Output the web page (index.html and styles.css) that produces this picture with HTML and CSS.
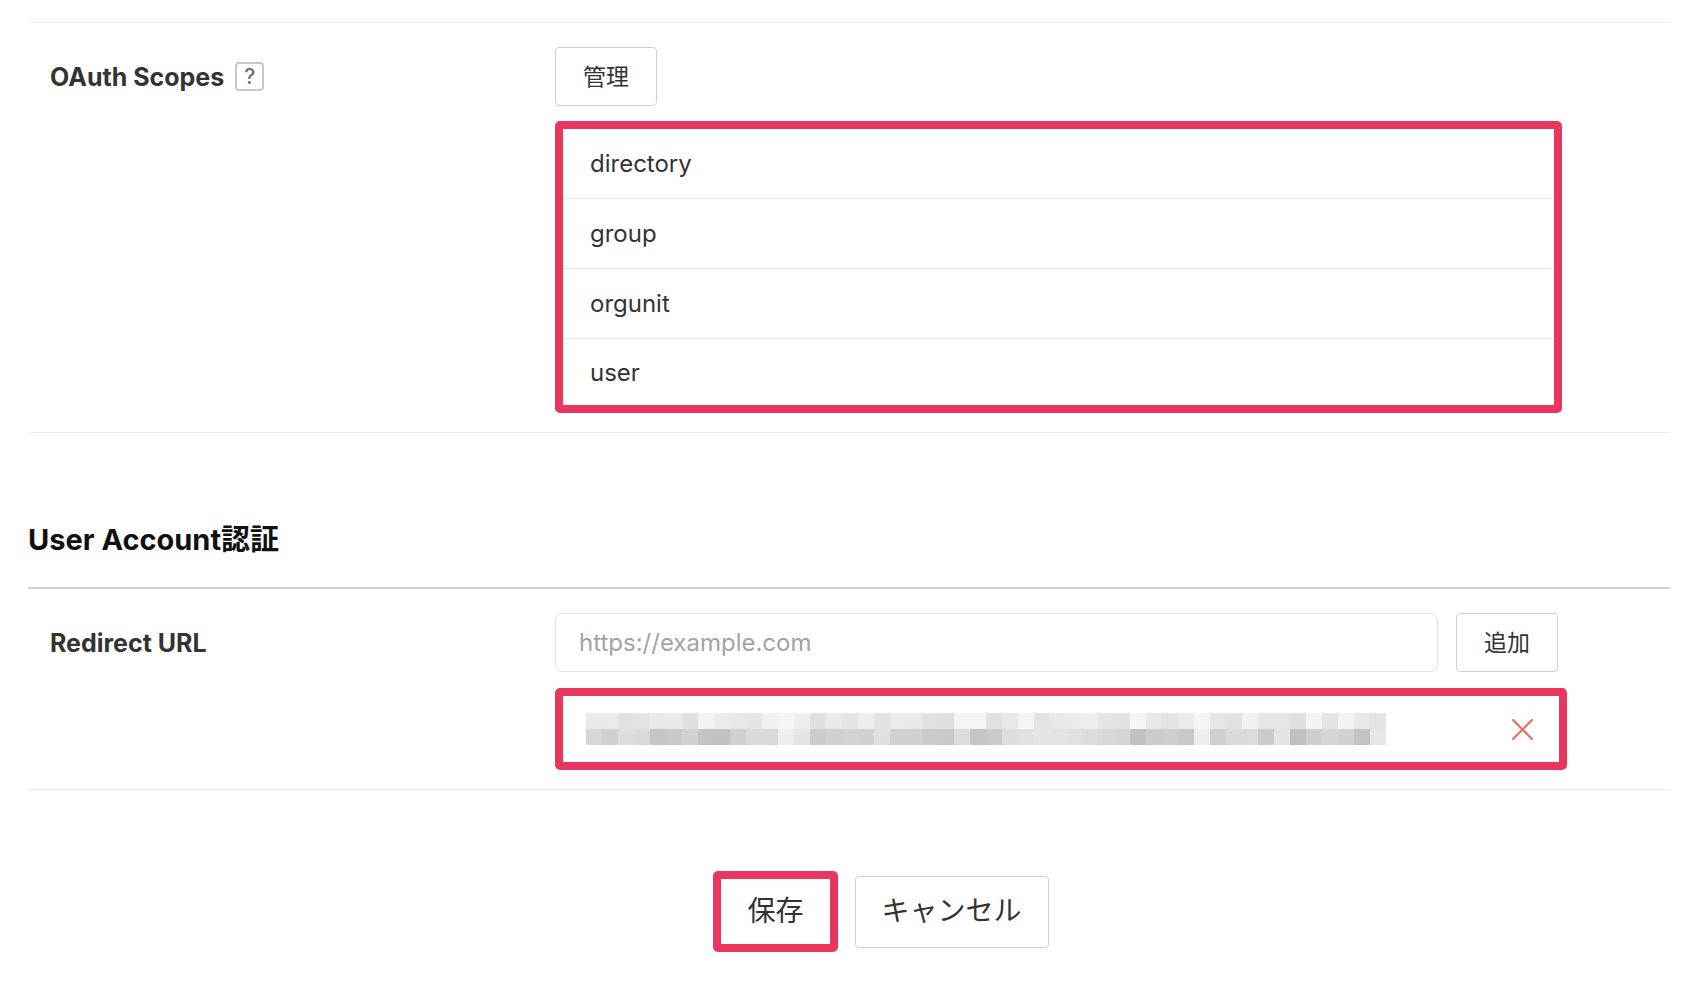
FILE: index.html
```html
<!DOCTYPE html>
<html lang="ja">
  <head>
    <meta charset="UTF-8" />
    <meta name="viewport" content="width=device-width, initial-scale=1.0" />
    <title>アプリ設定</title>
    <link rel="stylesheet" href="styles.css">
  </head>
  <body>
    <div class="page">
      <div class="form-row form-row-first">
        <div class="form-label">
          OAuth Scopes <span class="help-badge">?</span>
        </div>
        <div class="form-field">
          <button class="btn">管理</button>
          <ul class="scope-list highlight">
            <li>directory</li>
            <li>group</li>
            <li>orgunit</li>
            <li>user</li>
          </ul>
        </div>
      </div>

      <h2 class="section-title">User Account認証</h2>

      <div class="form-row">
        <div class="form-label">Redirect URL</div>
        <div class="form-field">
          <div class="url-input-row">
            <input type="text" class="url-input" placeholder="https://example.com" />
            <button class="btn">追加</button>
          </div>
          <div class="url-item highlight">
            <div id="urlMosaic" class="url-mosaic"></div>
            <button class="remove-btn" title="削除">
              <svg width="21" height="21" viewBox="0 0 21 21">
                <path d="M1 1 L20 20 M20 1 L1 20" stroke="#ef6a5a" stroke-width="2" fill="none" stroke-linecap="round" />
              </svg>
            </button>
          </div>
        </div>
      </div>

      <div class="form-actions">
        <button class="btn btn-lg highlight">保存</button>
        <button class="btn btn-lg">キャンセル</button>
      </div>
    </div>
    <script>
      // Registered URL is masked: draw it as a 2-row mosaic of grey blocks
      const mosaic = document.getElementById("urlMosaic");
      const cols = 50;
      const gaps = [12, 38]; // word breaks stay almost white
      let seed = 7;

      function nextRand() {
        seed = (seed * 9301 + 49297) % 233280;
        return seed / 233280;
      }

      for (let row = 0; row < 2; row++) {
        for (let col = 0; col < cols; col++) {
          const cell = document.createElement("span");
          let shade;
          if (gaps.includes(col)) {
            shade = row === 0 ? 246 : 238;
          } else if (row === 0) {
            shade = 222 + Math.round(nextRand() * 24);
          } else {
            shade = 192 + Math.round(nextRand() * 38);
          }
          cell.style.background = "rgb(" + shade + "," + shade + "," + shade + ")";
          mosaic.appendChild(cell);
        }
      }
    </script>
  </body>
</html>
```

FILE: styles.css
```css
body {
  font-family: Inter, "Noto Sans CJK JP", sans-serif;
  background-color: #fff;
  color: #333;
  margin: 0;
  padding: 0;
}

.page {
  padding: 22px 20px 0 28px;
}

/* one labelled row of the settings form */
.form-row {
  display: grid;
  grid-template-columns: 527px 1fr;
  padding: 24px 0 19px;
  border-bottom: 1px solid #ebebeb;
}

.form-row-first {
  border-top: 1px solid #ebebeb;
}

.form-label {
  display: flex;
  align-items: center;
  gap: 11px;
  height: 59px;
  padding-left: 22px;
  font-size: 25px;
  font-weight: 700;
  color: #333;
}

.help-badge {
  display: inline-flex;
  align-items: center;
  justify-content: center;
  width: 29px;
  height: 29px;
  box-sizing: border-box;
  border: 2px solid #c8c8c8;
  border-radius: 4px;
  font-size: 21px;
  font-weight: 500;
  color: #6f6f6f;
}

.form-field {
  display: flex;
  flex-direction: column;
  align-items: flex-start;
}

.btn {
  font-family: inherit;
  font-size: 23px;
  color: #333;
  background-color: #fff;
  border: 1px solid #cfcfcf;
  border-radius: 4px;
  height: 59px;
  padding: 0 27px 4px;
  cursor: pointer;
}

.btn-lg {
  font-size: 28px;
  height: 72px;
  padding: 0 26px 5px;
}

/* red outline used to point out the edited parts */
.highlight {
  border: 8px solid #e8365e;
  border-radius: 5px;
}

.btn-lg.highlight {
  height: 81px;
  padding: 0 26px 5px;
}

.scope-list {
  list-style: none;
  margin: 15px 0 0;
  padding: 0;
  width: 1007px;
  box-sizing: border-box;
}

.scope-list li {
  display: flex;
  align-items: center;
  height: 69px;
  padding-left: 27px;
  font-size: 24px;
  color: #333;
  border-bottom: 1px solid #e8e8e8;
}

.scope-list li:last-child {
  height: 66px;
  border-bottom: none;
}

.section-title {
  margin: 0;
  padding: 89px 0 29px;
  font-size: 29px;
  line-height: 36px;
  font-weight: 700;
  color: #111;
  border-bottom: 2px solid #d0d0d0;
}

.url-input-row {
  display: flex;
  gap: 18px;
  width: 1003px;
}

.url-input {
  flex: 1;
  height: 59px;
  box-sizing: border-box;
  padding: 0 23px;
  font-family: inherit;
  font-size: 24px;
  color: #333;
  border: 1px solid #e2e2e2;
  border-radius: 7px;
  outline: none;
}

.url-input::placeholder {
  color: #a3a3a3;
}

.url-item {
  display: flex;
  align-items: center;
  justify-content: space-between;
  width: 1012px;
  height: 82px;
  box-sizing: border-box;
  margin-top: 16px;
  padding: 0 26px 0 23px;
}

.url-mosaic {
  display: grid;
  grid-template-columns: repeat(50, 16px);
  grid-auto-rows: 16px;
}

.remove-btn {
  display: flex;
  padding: 0;
  border: none;
  background: none;
  cursor: pointer;
}

.form-actions {
  display: flex;
  justify-content: center;
  align-items: center;
  gap: 17px;
  padding: 81px 0 0 64px;
}
```
